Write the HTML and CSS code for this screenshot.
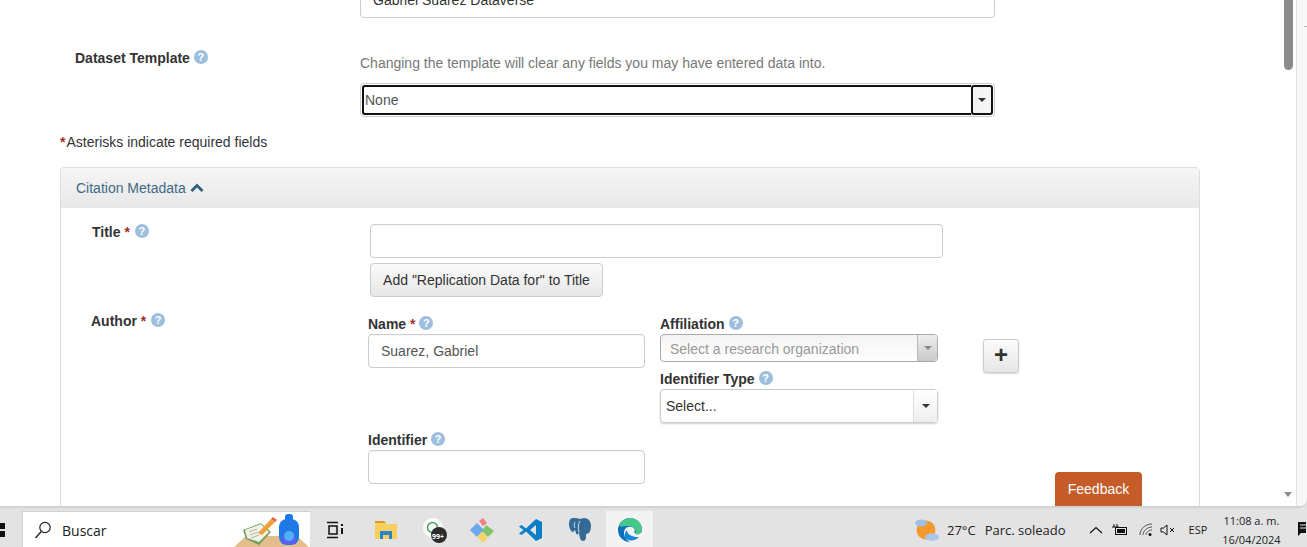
FILE: index.html
```html
<!DOCTYPE html>
<html lang="en">
<head>
<meta charset="utf-8">
<title>Dataset</title>
<link rel="stylesheet" href="styles.css">
</head>
<body>
<div class="window">
  <main class="page">
    <div class="host-input"><span>Gabriel Suarez Dataverse</span></div>
    <div class="template-row">
      <div class="template-label"><b>Dataset Template</b><span class="help">?</span></div>
      <div class="template-value">
        <p class="hint">Changing the template will clear any fields you may have entered data into.</p>
        <div class="focus-select">
          <span class="focus-text">None</span>
          <span class="focus-btn"><i class="caret"></i></span>
        </div>
      </div>
    </div>
    <p class="required-note"><span class="star note-star">*</span>Asterisks indicate required fields</p>
    <section class="panel">
      <header class="panel-head">Citation Metadata
        <svg class="chev" width="14" height="10" viewBox="0 0 14 10"><path d="M1.5 8 7 2.5 12.5 8" fill="none" stroke="#2f5f80" stroke-width="2.8"/></svg>
      </header>
      <div class="panel-body">
        <div class="title-row">
          <div class="title-label"><b>Title</b> <span class="star">*</span><span class="help">?</span></div>
          <div class="title-value">
            <div class="input"></div>
            <div class="btn">Add "Replication Data for" to Title</div>
          </div>
        </div>
        <div class="author-row">
          <div class="author-label"><b>Author</b> <span class="star">*</span><span class="help">?</span></div>
          <div class="author-grid">
            <div class="cell-name">
              <div class="sub-label"><b>Name</b> <span class="star">*</span><span class="help">?</span></div>
              <div class="input filled">Suarez, Gabriel</div>
            </div>
            <div class="cell-side">
              <div class="sub-label"><b>Affiliation</b><span class="help">?</span></div>
              <div class="combo"><span>Select a research organization</span><span class="combo-btn"><i class="caret grey"></i></span></div>
              <div class="sub-label second"><b>Identifier Type</b><span class="help">?</span></div>
              <div class="select"><span>Select...</span><span class="select-btn"><i class="caret"></i></span></div>
            </div>
            <div class="cell-id">
              <div class="sub-label"><b>Identifier</b><span class="help">?</span></div>
              <div class="input"></div>
            </div>
          </div>
          <div class="plus">+</div>
        </div>
      </div>
    </section>
    <div class="feedback">Feedback</div>
  </main>
  <div class="scrollbar">
    <div class="thumb"></div>
    <i class="scroll-arrow"></i>
  </div>
  <div class="side-strip"><i></i></div>
</div>
<footer class="taskbar">
  <svg class="start" width="6" height="14" viewBox="0 0 6 14"><path d="M0 0h5v6H0zM0 8h5v6H0z" fill="#111"/></svg>
  <div class="search">
    <svg width="18" height="20" viewBox="0 0 18 20"><circle cx="11" cy="7.5" r="5.2" fill="none" stroke="#222" stroke-width="1.2"/><path d="M7.3 11.5 1.500 18" stroke="#222" stroke-width="1.3"/></svg>
    <span class="search-text">Buscar</span>
    <svg class="search-art" width="77" height="36" viewBox="0 0 77 36">
      <path d="M0 36 13 24h51l13 12z" fill="#e3bd8c"/>
      <path d="M10 18 28 11l10 9-12 13-13-6z" fill="#6f9e5a"/>
      <path d="M12 18 28 12l8 8-10 10-12-4z" fill="#f1f1e6"/>
      <path d="M16 20l8-3M17 23l8-3M18 26l8-3" stroke="#a9b79c"/>
      <path d="M25 21 38 7l4 3-13 13z" fill="#f0a13a"/>
      <path d="M38 7l2-2 4 3-2 2z" fill="#e8604c"/>
      <rect x="46" y="7" width="20" height="26" rx="8" fill="#1c79e6"/>
      <rect x="52" y="2" width="8" height="7" rx="3" fill="#1c79e6"/>
      <path d="M49 26a7 7 0 0 1 14 0v6H49z" fill="#5a5ff0"/>
      <circle cx="56" cy="24" r="5" fill="#4fb2f5"/>
    </svg>
  </div>
  <div class="tasks">
    <svg class="t-view" width="20" height="18" viewBox="0 0 20 18"><path d="M2 1.500h11M2 16.500h11M4 5h8v8H4z" fill="none" stroke="#111" stroke-width="1.500"/><path d="M16 3h2v2h-2zM16 7h2v6h-2z" fill="#111"/></svg>
    <svg class="t-folder" width="24" height="22" viewBox="0 0 24 22"><path d="M1 2h9l2 3h11v15H1z" fill="#f7cf5e"/><path d="M1 2h9l2 2H1z" fill="#d39b22"/><path d="M6 20v-8h12v8h-3v-4H9v4z" fill="#2a86c8"/></svg>
    <svg class="t-whats" width="26" height="26" viewBox="0 0 26 26"><circle cx="10" cy="11" r="10" fill="#fff"/><circle cx="9.500" cy="10.500" r="5" fill="none" stroke="#3aa655" stroke-width="1.500"/><circle cx="16" cy="18" r="8" fill="#2b2b2b"/></svg>
    <span class="badge">99+</span>
    <svg class="t-git" width="26" height="26" viewBox="0 0 26 26"><path d="M1 13 8 6l7 7-7 7z" fill="#6ea8f0"/><path d="M10 4l4-3 4 5-4 3z" fill="#ef7f7f"/><path d="M17 8l8 6-6 6-6-6z" fill="#7fc267"/><path d="M8 20l5-5 6 6-5 5z" fill="#f5d56a"/></svg>
    <svg class="t-vscode" width="24" height="24" viewBox="0 0 24 24"><path d="M17 1 23 4v16l-6 3L7 13.500 2.500 17 0 15.500 4.500 12 0 8.500 2.500 7 7 10.500zM17 7l-6 5 6 5z" fill="#0a7fc8"/></svg>
    <svg class="t-pg" width="24" height="26" viewBox="0 0 24 26"><path d="M5 1c-3 0-4 3-4 6 0 4 2 8 4 8 1 0 1-2 2-2l1 3c1 3 3 1 3-2 0 4 1 10 4 10s3-3 3-7c3 0 5-3 5-8 0-5-3-8-7-8-2 0-3 1-4 1-2-1-4-1-7-1z" fill="#336a96"/><path d="M12 4c-2 2-2 8-1 11M7 5c-1 2-1 4 0 6" stroke="#cfe0ee" stroke-width="1" fill="none"/></svg>
    <div class="t-edge">
      <svg width="26" height="26" viewBox="0 0 26 26"><path d="M13 1a12 12 0 0 1 12 12c0 3-3 5-6 4-2-1-2-3-1-4-1-3-4-4-7-3-4 1-5 6-3 10 1 2 3 4 5 5A12 12 0 0 1 13 1z" fill="#0f6fb8"/><path d="M2 9C4 4 8 1 13 1a12 12 0 0 1 12 12c0 3-3 5-6 4 0-5-3-8-7-8-4 0-8 1-10 0z" fill="#46c88a"/><path d="M8 21c3 3 9 4 14-1-2 0-5 0-7-1-3-1-5-3-5-6-2 2-3 5-2 8z" fill="#1488d8"/></svg>
    </div>
  </div>
  <div class="tray">
    <svg class="weather" width="26" height="24" viewBox="0 0 26 24"><circle cx="12" cy="12" r="9.500" fill="#f29a2e"/><ellipse cx="7" cy="5" rx="6" ry="3.500" fill="#9fc0e4"/><ellipse cx="18" cy="19" rx="7" ry="3.800" fill="#a9c6e6"/></svg>
    <span class="temp">27°C</span>
    <span class="sky">Parc. soleado</span>
    <svg class="tray-up" width="14" height="8" viewBox="0 0 14 8"><path d="M1 7 7 1.500 13 7" fill="none" stroke="#111" stroke-width="1.200"/></svg>
    <svg class="tray-bat" width="16" height="12" viewBox="0 0 16 12"><path d="M2 0v3M5 0v3M0 3h7" stroke="#111"/><rect x="3.500" y="3.500" width="11" height="7" fill="none" stroke="#111"/><rect x="5" y="5" width="8" height="4" fill="#111"/></svg>
    <svg class="tray-wifi" width="14" height="14" viewBox="0 0 14 14"><path d="M1 12C1 6 6 1 13 1M4 12c0-4 4-8 9-8M7 12c0-2 2-5 6-5" fill="none" stroke="#555"/><circle cx="11" cy="11.500" r="1.500" fill="#111"/></svg>
    <svg class="tray-vol" width="16" height="14" viewBox="0 0 16 14"><path d="M1 5h2.500L7 2v10L3.500 9H1z" fill="none" stroke="#111"/><path d="m10 5 4 4m0-4-4 4" stroke="#111"/></svg>
    <span class="lang">ESP</span>
    <div class="clock"><span>11:08 a. m.</span><span>16/04/2024</span></div>
    <svg class="notif" width="8" height="18" viewBox="0 0 8 18"><path d="M0 1h8v11H3l-3 3z" fill="#111"/><path d="M2 4h6M2 7h6" stroke="#e4e4e4"/></svg>
  </div>
</footer>
</body>
</html>
```

FILE: styles.css
```css
* { box-sizing: border-box; }
html, body { margin: 0; height: 547px; overflow: hidden; }
body {
  position: relative;
  font-family: "Liberation Sans", Arial, sans-serif;
  font-size: 14px;
  color: #333;
  background: #e3e3e3;
}
b { color: #333; }
p { margin: 0; }

.window {
  display: flex;
  height: 507px;
  background: #fff;
  border-bottom: 1px solid #cfcfcf;
  border-bottom-right-radius: 8px;
  box-shadow: 0 1px 2px rgba(0, 0, 0, .08);
  overflow: hidden;
}
.page {
  position: relative;
  width: 1283px;
  flex: none;
  padding-left: 60px;
  overflow: hidden;
}
.scrollbar {
  position: relative;
  width: 13px;
  flex: none;
  background: #fff;
}
.thumb {
  width: 9px;
  height: 70px;
  margin-left: 1px;
  background: #8b8b8b;
  border-radius: 0 0 5px 5px;
}
.scroll-arrow {
  position: absolute;
  left: 1px;
  bottom: 9px;
  border: 4px solid transparent;
  border-top: 5px solid #8b8b8b;
  border-bottom: 0;
}
.side-strip {
  flex: 1;
  background: #f8f8f8;
  border-left: 1px solid #e0e0e0;
  padding-top: 26px;
}
.side-strip i {
  display: block;
  width: 4px;
  height: 1px;
  margin-left: 7px;
  background: #bbb;
}

.host-input {
  width: 635px;
  height: 35px;
  margin: -17px 0 0 300px;
  padding: 6px 12px;
  border: 1px solid #ccc;
  border-radius: 4px;
  line-height: 20px;
}

.template-row { display: flex; }
.template-label {
  width: 300px;
  padding: 31px 0 0 15px;
  line-height: 18px;
}
.template-label .help { margin-left: 4px; }
.template-value { width: 635px; }
.hint {
  margin-top: 35px;
  line-height: 20px;
  color: #777;
}
.focus-select {
  display: flex;
  height: 34px;
  margin-top: 10px;
  padding: 1px;
  border: 1px solid #ccc;
  border-radius: 4px;
}
.focus-text {
  flex: 1;
  padding-left: 1px;
  border: 2px solid #111;
  border-right-width: 0;
  border-radius: 3px 0 0 3px;
  line-height: 26px;
  color: #555;
}
.focus-btn {
  display: flex;
  align-items: center;
  justify-content: center;
  width: 22px;
  border: 2px solid #111;
  border-radius: 3px;
  background: #f4f4f4;
}

.caret {
  width: 0;
  height: 0;
  border: 4px solid transparent;
  border-top-color: #333;
  border-bottom: 0;
}
.caret.grey { border-top-color: #888; }

.help {
  display: inline-block;
  width: 14px;
  height: 14px;
  margin-left: 5px;
  border-radius: 50%;
  background: #9dbedd;
  color: #fff;
  font-size: 11px;
  font-weight: 700;
  line-height: 14px;
  text-align: center;
  vertical-align: 2px;
}
.star { color: #a03030; font-weight: 700; }
.note-star { margin-right: 1px; }

.required-note {
  margin-top: 15px;
  line-height: 20px;
}

.panel {
  width: 1140px;
  margin-top: 15px;
  border: 1px solid #ddd;
  border-radius: 4px 4px 0 0;
  padding-bottom: 40px;
}
.panel-head {
  display: flex;
  align-items: center;
  gap: 4px;
  height: 40px;
  padding-left: 15px;
  background: linear-gradient(#f5f5f5, #e8e8e8);
  color: #3f6a86;
}
.panel-body { padding-top: 16px; }

.title-row { display: flex; }
.title-label {
  width: 309px;
  padding: 0 0 0 31px;
  line-height: 17px;
}
.title-value { width: 573px; }
.input {
  height: 34px;
  padding: 6px 12px;
  border: 1px solid #ccc;
  border-radius: 4px;
  line-height: 20px;
  background: #fff;
  box-shadow: inset 0 1px 1px rgba(0, 0, 0, .03);
}
.input.filled { color: #555; }
.btn {
  width: 233px;
  height: 34px;
  margin-top: 5px;
  border: 1px solid #ccc;
  border-radius: 4px;
  background: linear-gradient(#fbfbfb, #e6e6e6);
  line-height: 32px;
  text-align: center;
  white-space: nowrap;
}

.author-row { display: flex; margin-top: 19px; }
.author-label {
  width: 307px;
  margin-top: -3px;
  padding: 0 0 0 30px;
  line-height: 17px;
}
.author-grid {
  display: grid;
  grid-template-columns: 277px 278px;
  grid-template-rows: 107px auto;
  column-gap: 15px;
}
.cell-id { grid-column: 1; margin-top: 9px; }
.sub-label { height: 18px; line-height: 17px; }
.sub-label .help { margin-left: 4px; }
.sub-label.second { height: 27px; padding-top: 8px; line-height: 18px; }

.combo {
  display: flex;
  justify-content: space-between;
  height: 28px;
  padding-left: 9px;
  border: 1px solid #aaa;
  border-radius: 4px;
  background: linear-gradient(#f3f3f3, #fff);
  color: #999;
  line-height: 29px;
}
.combo-btn {
  display: flex;
  align-items: center;
  justify-content: center;
  width: 20px;
  border-left: 1px solid #bbb;
  border-radius: 0 3px 3px 0;
  background: linear-gradient(#eee, #c9c9c9);
}
.select {
  display: flex;
  justify-content: space-between;
  height: 34px;
  padding-left: 5px;
  border: 1px solid #ccc;
  border-radius: 4px;
  box-shadow: 0 1px 2px rgba(0, 0, 0, .2);
  line-height: 32px;
}
.select-btn {
  display: flex;
  align-items: center;
  justify-content: center;
  width: 24px;
  border-left: 1px solid #ddd;
  background: linear-gradient(#fff, #eee);
}
.plus {
  width: 36px;
  height: 34px;
  margin: 23px 0 0 45px;
  border: 1px solid #ccc;
  border-radius: 3px;
  background: linear-gradient(#fbfbfb, #e6e6e6);
  box-shadow: 0 1px 2px rgba(0, 0, 0, .15);
  color: #333;
  font-size: 24px;
  font-weight: 700;
  line-height: 30px;
  text-align: center;
}

.feedback {
  position: absolute;
  left: 1055px;
  bottom: 0;
  width: 87px;
  height: 34px;
  border-radius: 4px 4px 0 0;
  background: #c55b28;
  color: #fff;
  line-height: 34px;
  text-align: center;
}

.taskbar {
  display: flex;
  align-items: center;
  height: 37px;
  margin-top: 4px;
  font-family: "Open Sans", "Noto Sans", sans-serif;
  font-size: 13px;
  color: #222;
}
.start { flex: none; }
.search {
  position: relative;
  display: flex;
  align-items: center;
  width: 288px;
  height: 37px;
  margin-left: 16px;
  padding-left: 11px;
  background: #fff;
  border: 1px solid #d0d0d0;
  border-width: 1px 0 0 1px;
  font-size: 14px;
}
.search-text { margin-left: 10px; }
.search-art {
  position: absolute;
  right: 0;
  top: 0;
}
.tasks {
  position: relative;
  display: flex;
  align-items: center;
  height: 37px;
}
.t-view { margin-left: 15px; }
.t-folder { margin-left: 29px; }
.t-whats { margin-left: 25px; }
.badge {
  position: absolute;
  left: 122px;
  top: 21px;
  font-size: 7px;
  color: #fff;
  font-weight: 700;
  line-height: 10px;
}
.t-git { margin-left: 20px; }
.t-vscode { margin-left: 24px; }
.t-pg { margin-left: 25px; }
.t-edge {
  display: flex;
  align-items: center;
  justify-content: center;
  width: 47px;
  height: 37px;
  margin-left: 14px;
  background: #f3f3f3;
}
.tray {
  display: flex;
  align-items: center;
  height: 37px;
  margin-left: 261px;
}
.temp { margin-left: 7px; }
.sky { margin-left: 9px; }
.tray-up { margin-left: 23px; }
.tray-bat { margin-left: 9px; }
.tray-wifi { margin-left: 11px; }
.tray-vol { margin-left: 7px; }
.lang { margin-left: 13px; font-size: 11px; }
.clock {
  display: flex;
  flex-direction: column;
  align-items: center;
  width: 58px;
  margin-left: 15px;
  font-size: 11px;
  line-height: 19px;
}
.notif { margin-left: 18px; }
```
